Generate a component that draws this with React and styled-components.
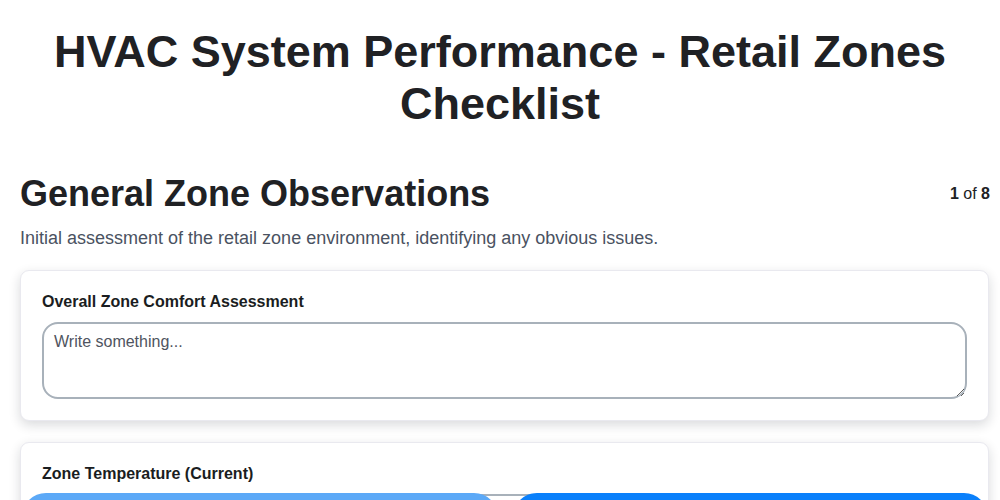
import React from 'react';
import styled, { createGlobalStyle } from 'styled-components';

const GlobalStyle = createGlobalStyle`
  * { box-sizing: border-box; }
  body {
    margin: 0;
    background: #ffffff;
    font-family: "Liberation Sans", Arial, sans-serif;
    color: #1f2328;
  }
`;

const Page = styled.div`
  padding-bottom: 80px;
`;

const Title = styled.h1`
  margin: 0;
  padding: 26px 40px 0;
  font-size: 45px;
  line-height: 52px;
  font-weight: 700;
  text-align: center;
  color: #202124;
`;

const Section = styled.section`
  padding: 42px 10px 0 20px;
`;

const SectionHead = styled.div`
  display: flex;
  align-items: center;
  justify-content: space-between;
`;

const SectionTitle = styled.h2`
  margin: 0;
  font-size: 36px;
  line-height: 44px;
  font-weight: 700;
  color: #202124;
`;

const Counter = styled.div`
  font-size: 16px;
  color: #202124;
  b { font-weight: 700; }
`;

const SectionText = styled.p`
  margin: 10px 0 20px;
  font-size: 18px;
  line-height: 24px;
  color: #4a5261;
`;

const Card = styled.div`
  margin-right: 1px;
  margin-bottom: 21px;
  padding: 20px 21px 21px;
  background: #fff;
  border: 1px solid #e9e9ef;
  border-radius: 9px;
  box-shadow: 0 4px 12px rgba(20, 24, 40, 0.16);
`;

const Label = styled.label`
  display: block;
  margin-bottom: 10px;
  font-size: 16px;
  line-height: 21px;
  font-weight: 700;
  color: #1a1d21;
`;

const TextArea = styled.textarea`
  display: block;
  width: 100%;
  height: 77px;
  padding: 9px 10px;
  border: 2px solid #a8b1ba;
  border-radius: 16px;
  font-family: inherit;
  font-size: 16px;
  color: #202124;
  resize: vertical;
  &::placeholder { color: #4f5460; }
`;

const Input = styled.input`
  display: block;
  width: 100%;
  height: 44px;
  padding: 0 12px;
  border: 2px solid #a8b1ba;
  border-radius: 16px;
  font-family: inherit;
  font-size: 16px;
`;

const Footer = styled.div`
  position: fixed;
  left: 22px;
  right: 12px;
  bottom: -41px;
  display: grid;
  grid-template-columns: 1fr 1fr;
  gap: 15px;
`;

const NavButton = styled.button`
  height: 48px;
  border: none;
  border-radius: 24px;
  background: ${({ $primary }) => ($primary ? '#0a80fb' : '#5ca9f7')};
`;

export default function App() {
  return (
    <Page>
      <GlobalStyle />
      <Title>HVAC System Performance - Retail Zones Checklist</Title>
      <Section>
        <SectionHead>
          <SectionTitle>General Zone Observations</SectionTitle>
          <Counter><b>1</b> of <b>8</b></Counter>
        </SectionHead>
        <SectionText>
          Initial assessment of the retail zone environment, identifying any obvious issues.
        </SectionText>
        <Card>
          <Label>Overall Zone Comfort Assessment</Label>
          <TextArea placeholder="Write something..." />
        </Card>
        <Card>
          <Label>Zone Temperature (Current)</Label>
          <Input type="text" />
        </Card>
      </Section>
      <Footer>
        <NavButton aria-label="Previous" />
        <NavButton $primary aria-label="Next" />
      </Footer>
    </Page>
  );
}
